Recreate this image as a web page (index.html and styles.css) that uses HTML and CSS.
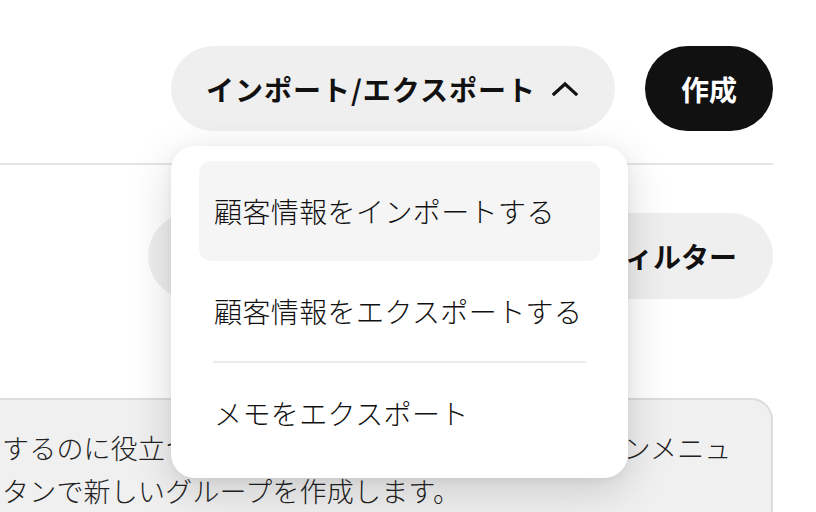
FILE: index.html
```html
<!DOCTYPE html>
<html lang="ja">
<head>
<meta charset="utf-8">
<title>顧客</title>
<link rel="stylesheet" href="styles.css">
</head>
<body>
<div class="page">
  <header class="toolbar">
    <div class="menu-wrap">
      <button class="btn btn-light"><span class="btn-label">インポート/エクスポート</span>
        <svg class="chev" width="28" height="16" viewBox="0 0 28 16" aria-hidden="true"><path d="M3 13 L14 3 L25 13" fill="none" stroke="#111" stroke-width="3.2" stroke-linecap="square" stroke-linejoin="miter"/></svg>
      </button>
      <div class="menu">
        <div class="menu-item active">顧客情報をインポートする</div>
        <div class="menu-item">顧客情報をエクスポートする</div>
        <div class="menu-sep"></div>
        <div class="menu-item">メモをエクスポート</div>
      </div>
    </div>
    <button class="btn btn-dark">作成</button>
  </header>
  <div class="search-row">
    <div class="search">検索</div>
    <button class="btn-filter">フィルター</button>
  </div>
  <div class="card">
    <p class="card-text">するのに役立つ機能です。追加するには、アクションメニュ<br>タンで新しいグループを作成します。</p>
  </div>
</div>
</body>
</html>
```

FILE: styles.css
```css
html, body {
  margin: 0;
  padding: 0;
  background: #ffffff;
  overflow: hidden;
}
body {
  width: 816px;
  height: 512px;
  font-family: "Noto Sans CJK JP", "Noto Sans", sans-serif;
  color: #111;
}
.page {
  width: 773px;
}
.toolbar {
  display: flex;
  justify-content: flex-end;
  align-items: center;
  gap: 30px;
  padding: 46px 0 32px;
  border-bottom: 2px solid #e4e4e4;
}
.menu-wrap {
  position: relative;
}
.btn {
  font-family: inherit;
  font-weight: 700;
  font-size: 28px;
  height: 85px;
  border: none;
  border-radius: 43px;
  display: flex;
  align-items: center;
  cursor: pointer;
}
.btn-light {
  background: #efefef;
  color: #111;
  padding: 0 36px 0 35px;
  gap: 15px;
}
.btn-label {
  letter-spacing: 1px;
}
.chev {
  display: block;
}
.btn-dark {
  background: #111111;
  color: #fff;
  padding: 0 36px;
}
.menu {
  position: absolute;
  top: 100px;
  left: 0;
  width: 457px;
  box-sizing: border-box;
  padding: 15px 28px;
  background: #fff;
  border-radius: 24px;
  box-shadow: 0 12px 44px rgba(0, 0, 0, 0.16), 0 2px 8px rgba(0, 0, 0, 0.05);
  z-index: 10;
}
.menu-item {
  height: 100px;
  display: flex;
  align-items: center;
  padding: 0 15px;
  font-size: 28px;
  font-weight: 300;
  letter-spacing: 0.4px;
  color: #111;
  border-radius: 12px;
}
.menu-item.active {
  background: #f5f5f5;
}
.menu-sep {
  height: 2px;
  background: #ebebeb;
  margin: 0 14px;
}
.search-row {
  display: flex;
  margin: 48px 0 0 148px;
  height: 86px;
}
.search {
  flex: 1;
  background: #efefef;
  border-radius: 43px 0 0 43px;
  display: flex;
  align-items: center;
  padding-left: 36px;
  font-size: 28px;
  color: #777;
}
.btn-filter {
  font-family: inherit;
  font-weight: 700;
  font-size: 28px;
  border: none;
  background: #efefef;
  color: #111;
  border-radius: 0 43px 43px 0;
  padding: 0 36px 0 10px;
}
.card {
  margin: 99px 0 0 -40px;
  background: #f0f0f0;
  border: 2px solid #dcdcdc;
  border-radius: 22px;
  padding: 26px 40px 30px 40px;
}
.card-text {
  margin: 0;
  font-size: 27px;
  font-weight: 300;
  line-height: 43px;
  letter-spacing: 0.2px;
  color: #222;
  white-space: nowrap;
}
```
